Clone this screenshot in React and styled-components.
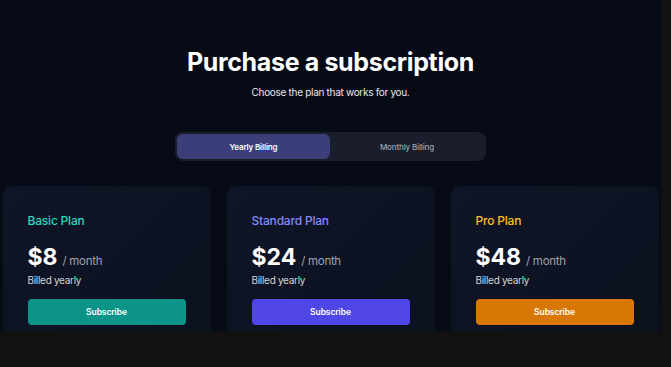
import React from "react";
import styled, { createGlobalStyle } from "styled-components";

const Global = createGlobalStyle`
  html, body { margin: 0; padding: 0; background: #111111; }
  body { font-family: Inter, "Noto Sans", sans-serif; -webkit-font-smoothing: antialiased; }
`;

const Viewport = styled.div`
  width: 661px;
  height: 331px;
  overflow: hidden;
  background: #070b16;
`;

const Content = styled.main`
  display: flex;
  flex-direction: column;
  align-items: center;
  & > * { flex-shrink: 0; }
`;

const Title = styled.h1`
  margin: 47px 0 0;
  font-size: 25px;
  line-height: 30px;
  font-weight: 700;
  color: #ffffff;
  letter-spacing: -0.35px;
`;

const Subtitle = styled.p`
  margin: 8px 0 0;
  font-size: 10px;
  line-height: 14px;
  color: #e5e7eb;
  letter-spacing: -0.3px;
`;

const Toggle = styled.div`
  margin-top: 33px;
  width: 311px;
  height: 29px;
  box-sizing: border-box;
  padding: 2px;
  border-radius: 8px;
  background: #1a1d2c;
  display: grid;
  grid-template-columns: 153px 1fr;
`;

const ToggleOption = styled.button`
  border: 0;
  border-radius: 6px;
  font-family: inherit;
  font-size: 8px;
  letter-spacing: -0.15px;
  font-weight: ${(p) => (p.$active ? 600 : 500)};
  color: ${(p) => (p.$active ? "#ffffff" : "#9ca3af")};
  background: ${(p) => (p.$active ? "#3b3e78" : "transparent")};
  padding: 0;
  cursor: pointer;
`;

const Grid = styled.div`
  margin-top: 25px;
  display: grid;
  grid-template-columns: repeat(3, 208px);
  gap: 16px;
`;

const Card = styled.div`
  height: 170px;
  box-sizing: border-box;
  padding: 27px 25px;
  border-radius: 9px;
  background: linear-gradient(135deg, #101527 0%, #0c111f 100%);
`;

const PlanName = styled.div`
  font-size: 12px;
  line-height: 16px;
  font-weight: 500;
  letter-spacing: -0.2px;
  color: ${(p) => p.$color};
`;

const PriceRow = styled.div`
  margin-top: 14px;
  display: flex;
  align-items: baseline;
  gap: 5px;
`;

const Price = styled.span`
  font-size: 23px;
  line-height: 28px;
  font-weight: 700;
  color: #ffffff;
`;

const Per = styled.span`
  font-size: 11.5px;
  letter-spacing: -0.3px;
  color: #9ca3af;
`;

const Billed = styled.div`
  margin-top: 2px;
  font-size: 10px;
  line-height: 14px;
  letter-spacing: -0.3px;
  color: #d1d5db;
`;

const Button = styled.button`
  margin-top: 12px;
  width: 100%;
  height: 26px;
  border: 0;
  border-radius: 4px;
  background: ${(p) => p.$bg};
  color: #ffffff;
  font-family: inherit;
  font-size: 8.5px;
  font-weight: 600;
  letter-spacing: -0.1px;
  cursor: pointer;
`;

const plans = [
  { name: "Basic Plan", price: "$8", color: "#2dd4bf", bg: "#0d9488" },
  { name: "Standard Plan", price: "$24", color: "#818cf8", bg: "#4f46e5" },
  { name: "Pro Plan", price: "$48", color: "#fbbf24", bg: "#d97706" },
];

export default function App() {
  return (
    <>
      <Global />
      <Viewport>
        <Content>
          <Title>Purchase a subscription</Title>
          <Subtitle>Choose the plan that works for you.</Subtitle>
          <Toggle>
            <ToggleOption $active>Yearly Billing</ToggleOption>
            <ToggleOption>Monthly Billing</ToggleOption>
          </Toggle>
          <Grid>
            {plans.map((p) => (
              <Card key={p.name}>
                <PlanName $color={p.color}>{p.name}</PlanName>
                <PriceRow>
                  <Price>{p.price}</Price>
                  <Per>/ month</Per>
                </PriceRow>
                <Billed>Billed yearly</Billed>
                <Button $bg={p.bg}>Subscribe</Button>
              </Card>
            ))}
          </Grid>
        </Content>
      </Viewport>
    </>
  );
}
